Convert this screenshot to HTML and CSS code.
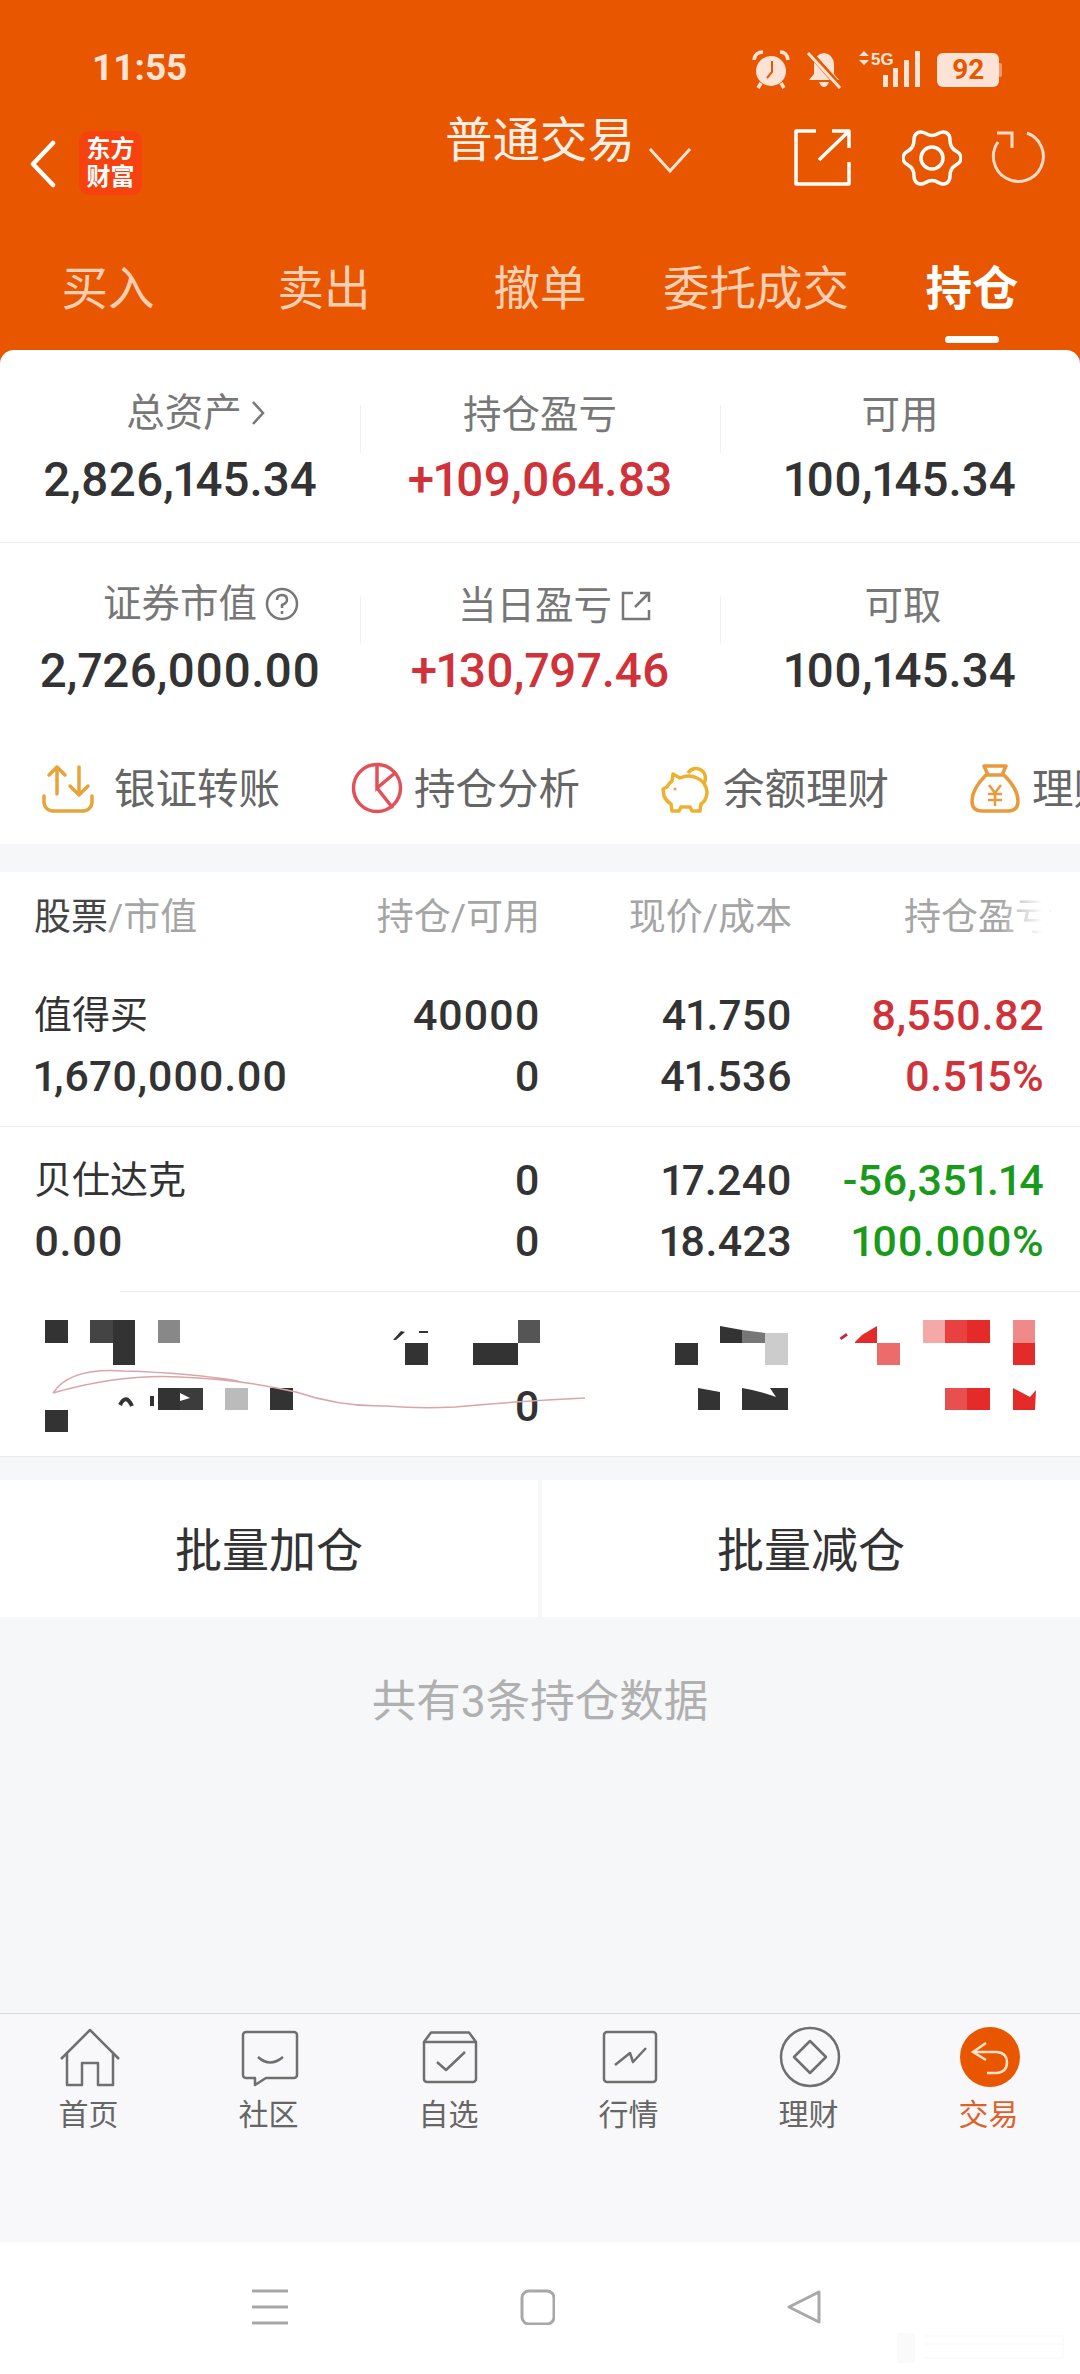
FILE: index.html
```html
<!DOCTYPE html>
<html>
<head>
<meta charset="UTF-8">
<title>持仓</title>
<link rel="stylesheet" href="styles.css">
</head>
<body>
<div class="phone">

	<div class="top">
		<div class="status">
			<span class="time">11:55</span>
			<svg class="st-alarm" width="40" height="40" viewBox="0 0 40 40">
				<circle cx="20" cy="22" r="15" fill="#fde3d5"/>
				<path d="M21 12V23L16 29" fill="none" stroke="#e85700" stroke-width="2"/>
				<path d="M3 11Q4 3 12 3M29 3Q36 3 37 11" fill="none" stroke="#fde3d5" stroke-width="3.5"/>
				<path d="M10 34L7 39M30 34L33 39" stroke="#fde3d5" stroke-width="3.5"/>
			</svg>
			<svg class="st-bell" width="36" height="38" viewBox="0 0 36 38">
				<path d="M18 2Q27 3 28 13V23L33 29H3L8 23V13Q9 3 18 2Z" fill="#fde3d5"/>
				<path d="M13 31H23Q21 36 18 36Q15 36 13 31Z" fill="#fde3d5"/>
				<path d="M3 1L35 37" stroke="#e85700" stroke-width="6"/>
				<path d="M2 2L34 37" stroke="#fde3d5" stroke-width="3"/>
			</svg>
			<svg class="st-signal" width="64" height="38" viewBox="0 0 64 38">
				<path d="M6 1L11 6H1ZM6 15L11 10H1Z" fill="#fde3d5"/>
				<text class="st-5g" x="13" y="15">5G</text>
				<rect x="25" y="25" width="5" height="12" fill="#fde3d5"/>
				<rect x="35" y="18" width="5" height="19" fill="#fde3d5"/>
				<rect x="46" y="10" width="5" height="27" fill="#fde3d5"/>
				<rect x="57" y="1" width="5" height="36" fill="#fde3d5"/>
			</svg>
			<span class="battery">92</span>
		</div>

		<div class="titlebar">
			<svg class="tb-back" width="27" height="48" viewBox="0 0 27 48">
				<path d="M24 3L4 24L24 45" fill="none" stroke="#fff" stroke-width="4.5" stroke-linecap="round" stroke-linejoin="round"/>
			</svg>
			<div class="logo"><span>东方</span><span>财富</span></div>
			<div class="tb-title">普通交易</div>
			<svg class="tb-down" width="44" height="28" viewBox="0 0 44 28">
				<path d="M2 3L22 25L42 3" fill="none" stroke="#fde3d5" stroke-width="3"/>
			</svg>
			<svg class="tb-open" width="60" height="60" viewBox="0 0 60 60">
				<path d="M23 3H3V56H56V34M26 32L56 3M39 3H56V20" fill="none" stroke="#fff" stroke-width="3.5" stroke-linejoin="round"/>
			</svg>
			<svg class="tb-gear" width="60" height="60" viewBox="0 0 60 60" fill="none" stroke="#fff" stroke-width="3.5">
				<defs><path id="lobe" d="M49.5 18.75C53 24.8 59 23 59 30C59 37 53 35.2 49.5 41.25"/></defs>
				<use href="#lobe"/>
				<use href="#lobe" transform="rotate(60 30 30)"/>
				<use href="#lobe" transform="rotate(120 30 30)"/>
				<use href="#lobe" transform="rotate(180 30 30)"/>
				<use href="#lobe" transform="rotate(240 30 30)"/>
				<use href="#lobe" transform="rotate(300 30 30)"/>
				<circle cx="30" cy="30" r="11"/>
			</svg>
			<svg class="tb-refresh" width="60" height="60" viewBox="0 0 60 60" fill="none" stroke="#fbdccb" stroke-width="3">
				<path d="M9 14A25 25 0 1 0 38 5M8 5H23V20"/>
			</svg>
		</div>

		<div class="tabs">
			<div class="tab">买入</div>
			<div class="tab">卖出</div>
			<div class="tab">撤单</div>
			<div class="tab">委托成交</div>
			<div class="tab tab-on">持仓</div>
		</div>
	</div>

	<div class="summary">
		<div class="sum-row sum-first">
			<div class="cell">
				<div class="label shift-a">总资产
					<svg class="lb-icon" width="16" height="26" viewBox="0 0 16 26"><path d="M3 2L13 13L3 24" fill="none" stroke="#777" stroke-width="2.5"/></svg>
				</div>
				<div class="value">2,826,145.34</div>
			</div>
			<div class="cell cell-line">
				<div class="label">持仓盈亏</div>
				<div class="value up">+109,064.83</div>
			</div>
			<div class="cell cell-line">
				<div class="label">可用</div>
				<div class="value">100,145.34</div>
			</div>
		</div>
		<div class="sum-row">
			<div class="cell">
				<div class="label shift-b">证券市值
					<svg class="lb-icon" width="34" height="34" viewBox="0 0 34 34"><circle cx="17" cy="17" r="15" fill="none" stroke="#777" stroke-width="2.5"/><path d="M12 13Q12 8 17 8Q22 8 22 13Q22 16 17 18V21M17 24V27" fill="none" stroke="#777" stroke-width="2.5"/></svg>
				</div>
				<div class="value">2,726,000.00</div>
			</div>
			<div class="cell cell-line">
				<div class="label shift-c">当日盈亏
					<svg class="lb-icon" width="32" height="32" viewBox="0 0 32 32"><path d="M13 3H3V29H29V20M15 17L29 3M20 3H29V12" fill="none" stroke="#777" stroke-width="2.5"/></svg>
				</div>
				<div class="value up">+130,797.46</div>
			</div>
			<div class="cell cell-line">
				<div class="label shift-d">可取</div>
				<div class="value">100,145.34</div>
			</div>
		</div>
		<div class="shortcuts">
			<div class="sc sc-first">
				<svg width="54" height="54" viewBox="0 0 54 54" fill="none" stroke="#e8a33a" stroke-width="3.5" stroke-linecap="round" stroke-linejoin="round">
					<path d="M16 6V33M8 14L16 6L24 14M38 6V33M29 25L38 34L47 25M3 35V41A9 9 0 0 0 12 50H42A9 9 0 0 0 51 41V35"/>
				</svg>
				<span>银证转账</span>
			</div>
			<div class="sc">
				<svg width="54" height="54" viewBox="0 0 54 54" fill="none" stroke="#e2515a" stroke-width="3.5" stroke-linecap="round">
					<circle cx="27" cy="27" r="23.5"/>
					<path d="M27 4V27L45 12M27 27L42 46"/>
				</svg>
				<span>持仓分析</span>
			</div>
			<div class="sc">
				<svg width="54" height="54" viewBox="0 0 54 54" fill="none" stroke="#eeb12f" stroke-width="3.5" stroke-linejoin="round">
					<path d="M14 13L21 17Q30 13 38 17Q47 21 48 31Q48 39 42 43L41 50H33L31 46H22L20 50H13L12 43Q7 40 5 35L4 28L8 26Q10 22 13 20Z"/>
					<path d="M29 12A8.500 8.500 0 1 1 45 22"/>
					<circle cx="16" cy="28" r="1.500" fill="#e8a33a" stroke="none"/>
				</svg>
				<span>余额理财</span>
			</div>
			<div class="sc">
				<svg width="54" height="54" viewBox="0 0 54 54" fill="none" stroke="#e89a3c" stroke-width="3.5" stroke-linejoin="round">
					<path d="M20 14L16 5H38L34 14M18 14H36Q50 28 50 40Q50 50 40 50H14Q4 50 4 40Q4 28 18 14Z"/>
					<path stroke-width="2.5" d="M21 24L27 32L33 24M27 32V45M20 33H34M20 39H34"/>
				</svg>
				<span>理财产品</span>
			</div>
		</div>
	</div>

	<div class="holdings">
		<div class="grid head">
			<div><span class="head-dark">股票</span>/市值</div>
			<div class="num">持仓/可用</div>
			<div class="num">现价/成本</div>
			<div class="num head-fade">持仓盈亏</div>
		</div>

		<div class="grid row">
			<div class="name">值得买</div>
			<div class="num">40000</div>
			<div class="num">41.750</div>
			<div class="num up">8,550.82</div>
			<div>1,670,000.00</div>
			<div class="num">0</div>
			<div class="num">41.536</div>
			<div class="num up">0.515%</div>
		</div>

		<div class="grid row">
			<div class="name">贝仕达克</div>
			<div class="num">0</div>
			<div class="num">17.240</div>
			<div class="num down">-56,351.14</div>
			<div>0.00</div>
			<div class="num">0</div>
			<div class="num">18.423</div>
			<div class="num down">100.000%</div>
		</div>

		<div class="grid row row-masked">
			<div></div><div></div><div></div><div></div>
			<div></div>
			<div class="num">0</div>
			<div></div><div></div>
			<svg class="mosaic" width="1080" height="168" viewBox="0 0 1080 168">
				<rect x="0" y="0" width="120" height="5" fill="#fff"/>
				<g fill="#333">
					<rect x="45" y="31" width="23" height="23"/>
					<rect x="90" y="31" width="23" height="23" fill="#444"/>
					<rect x="113" y="31" width="22" height="45"/>
					<rect x="158" y="31" width="22" height="23" fill="#888"/>
					<rect x="158" y="99" width="22" height="22"/>
					<rect x="180" y="99" width="23" height="22" fill="#3c3c3c"/>
					<rect x="225" y="99" width="23" height="22" fill="#bbb"/>
					<rect x="270" y="99" width="23" height="22"/>
					<rect x="45" y="121" width="23" height="22"/>
					<rect x="405" y="54" width="23" height="22"/>
					<rect x="473" y="54" width="45" height="22"/>
					<rect x="518" y="31" width="22" height="23" fill="#555"/>
					<path d="M393 51L401 42L405 43L396 51Z"/>
					<rect x="419" y="42" width="9" height="2"/>
					<path d="M720 37L742 41V54H720Z"/>
					<path d="M742 41L765 44V54H742Z" fill="#777"/>
					<path d="M765 44H788V76H765Z" fill="#ccc"/>
					<rect x="675" y="54" width="23" height="22"/>
					<path d="M698 99L720 103V121H698Z"/>
					<rect x="742" y="99" width="46" height="22"/>
					<path d="M120 116Q126 104 132 117M152 107V117" fill="none" stroke="#333" stroke-width="4"/>
				</g>
				<path d="M742 99Q760 102 776 108L770 99Z" fill="#fff"/>
				<path d="M180 104L190 109L180 112Z" fill="#fff"/>
				<path d="M855 53L862 46L877 37V54H855Z" fill="#e52a2a"/>
				<rect x="840" y="46" width="8" height="3" fill="#b8303a" transform="rotate(-35 844 48)"/>
				<rect x="877" y="54" width="23" height="22" fill="#ec6b6b"/>
				<rect x="923" y="31" width="22" height="23" fill="#f4a8a8"/>
				<rect x="945" y="31" width="22" height="23" fill="#e94040"/>
				<rect x="967" y="31" width="23" height="23" fill="#e52a2a"/>
				<rect x="1013" y="31" width="22" height="23" fill="#f08a8a"/>
				<rect x="1013" y="54" width="22" height="22" fill="#e52a2a"/>
				<rect x="945" y="99" width="22" height="22" fill="#e85050"/>
				<rect x="967" y="99" width="23" height="22" fill="#e52a2a"/>
				<path d="M1013 99L1030 108L1036 101L1035 121H1013Z" fill="#e52a2a"/>
				<path d="M53 104Q70 78 124 82Q190 84 238 92M53 104Q120 85 179 88Q240 90 296 103Q340 118 386 117Q420 120 455 118Q520 112 585 109" fill="none" stroke="#d9a5a8" stroke-width="1.500"/>
			</svg>
		</div>
	</div>

	<div class="actions">
		<div class="action">批量加仓</div>
		<div class="action">批量减仓</div>
	</div>

	<div class="note">共有3条持仓数据</div>

	<div class="nav">
		<div class="nav-item">
			<svg width="64" height="64" viewBox="0 0 64 64" fill="none" stroke="#6f6f6f" stroke-width="2.5" stroke-linejoin="round">
				<path d="M3 34L32 5L61 34M9 28V60H24V38H40V60H55V28"/>
			</svg>
			<span>首页</span>
		</div>
		<div class="nav-item">
			<svg width="64" height="64" viewBox="0 0 64 64" fill="none" stroke="#6f6f6f" stroke-width="2.5" stroke-linejoin="round">
				<path d="M8 7H56A3 3 0 0 1 59 10V50A3 3 0 0 1 56 53H28L17 60V53H8A3 3 0 0 1 5 50V10A3 3 0 0 1 8 7Z"/>
				<path d="M20 32Q32 43 45 32"/>
			</svg>
			<span>社区</span>
		</div>
		<div class="nav-item">
			<svg width="64" height="64" viewBox="0 0 64 64" fill="none" stroke="#6f6f6f" stroke-width="2.5" stroke-linejoin="round">
				<path d="M6 17L13 7.500H51L58 17V54A3 3 0 0 1 55 57H9A3 3 0 0 1 6 54ZM6 17H58"/>
				<path d="M19 37L28 45L47 27"/>
			</svg>
			<span>自选</span>
		</div>
		<div class="nav-item">
			<svg width="64" height="64" viewBox="0 0 64 64" fill="none" stroke="#6f6f6f" stroke-width="2.5" stroke-linejoin="round">
				<rect x="6" y="7" width="52" height="50" rx="3"/>
				<path d="M17 40L32 28L35 37L48 23"/>
			</svg>
			<span>行情</span>
		</div>
		<div class="nav-item">
			<svg width="64" height="64" viewBox="0 0 64 64" fill="none" stroke="#6f6f6f" stroke-width="2.5" stroke-linejoin="round">
				<circle cx="32" cy="32" r="29"/>
				<path d="M32 16L48 32L32 48L16 32Z"/>
			</svg>
			<span>理财</span>
		</div>
		<div class="nav-item nav-on">
			<svg width="64" height="64" viewBox="0 0 64 64" fill="none">
				<circle cx="32" cy="32" r="30" fill="#e85700"/>
				<path d="M28 18L15 27L28 35M15 27H39Q49 28 49 37Q49 47 39 48H29" stroke="#fde0c8" stroke-width="2.5"/>
			</svg>
			<span>交易</span>
		</div>
	</div>

	<div class="keys">
		<svg width="36" height="36" viewBox="0 0 36 36"><path d="M0 2H36M0 18H36M0 34H36" stroke="#a8a8a8" stroke-width="3"/></svg>
		<svg width="36" height="36" viewBox="0 0 36 36"><rect x="3" y="2" width="32" height="33" rx="7" fill="none" stroke="#a8a8a8" stroke-width="3"/></svg>
		<svg width="36" height="36" viewBox="0 0 36 36"><path d="M33 3V33L3 18Z" fill="none" stroke="#a8a8a8" stroke-width="3" stroke-linejoin="round"/></svg>
		<svg class="mark" width="180" height="36" viewBox="0 0 180 36">
			<rect x="4" y="3" width="18" height="30" fill="#fafafa"/>
			<path d="M30 6H170M30 14H170M30 28H170M170 6V28" stroke="#fbfbfb" stroke-width="2" fill="none"/>
		</svg>
	</div>

</div>
</body>
</html>
```

FILE: styles.css
```css
*{
	box-sizing : border-box;
}

html, body{
	margin : 0;
	padding : 0;
}

body{
	font-family : Roboto, "Noto Sans CJK SC", sans-serif;
}

.phone{
	position : relative;
	width : 1080px;
	height : 2374px;
	overflow : hidden;
	display : flex;
	flex-direction : column;
	background-color : #f6f7f9;
}

/* orange header */
.top{
	height : 364px;
	background-color : #e85700;
	color : #fff;
}

.status{
	height : 100px;
	display : flex;
	align-items : flex-start;
	padding-top : 49px;
	color : #fde3d5;
}

.time{
	margin-left : 92px;
	font-size : 37px;
	line-height : 38px;
	font-weight : 700;
}

.st-alarm{
	margin-left : 564px;
}

.st-bell{
	margin-left : 15px;
	margin-top : 2px;
}

.st-signal{
	margin-left : 16px;
	margin-top : 1px;
}

.st-5g{
	font-family : "Liberation Sans", sans-serif;
	font-size : 17px;
	font-weight : 700;
	fill : #fde3d5;
}

.battery{
	position : relative;
	width : 62px;
	height : 34px;
	margin-left : 15px;
	margin-top : 4px;
	background-color : #fde3d5;
	border-radius : 6px;
	color : #e85700;
	font-size : 28px;
	line-height : 34px;
	font-weight : 700;
	text-align : center;
}

.battery::after{
	content : "";
	position : absolute;
	left : 62px;
	top : 10px;
	width : 3px;
	height : 14px;
	background-color : #f59a66;
	border-radius : 0 2px 2px 0;
}

.titlebar{
	height : 100px;
	display : flex;
	align-items : center;
}

.tb-back{
	margin-left : 29px;
	margin-top : 28px;
}

.logo{
	width : 63px;
	height : 64px;
	margin-left : 23px;
	margin-top : 26px;
	background-color : #f5420f;
	border-radius : 10px;
	display : flex;
	flex-direction : column;
	align-items : center;
	justify-content : center;
	font-size : 24px;
	line-height : 28px;
	font-weight : 700;
}

.tb-title{
	margin-left : 303px;
	margin-bottom : 18px;
	font-size : 47.5px;
	line-height : 60px;
	color : #fdeee6;
}

.tb-down{
	margin-left : 13px;
	margin-top : 19px;
}

.tb-open{
	margin-left : 101px;
	margin-top : 16px;
}

.tb-gear{
	margin-left : 49px;
	margin-top : 16px;
}

.tb-refresh{
	margin-left : 27px;
	margin-top : 16px;
}

.tabs{
	margin-top : 38px;
	display : grid;
	grid-template-columns : repeat(5, 216px);
}

.tab{
	position : relative;
	font-size : 46.5px;
	line-height : 102px;
	text-align : center;
	color : #fbcfb4;
}

.tab-on{
	color : #fff;
	font-weight : 700;
}

.tab-on::after{
	content : "";
	position : absolute;
	left : 81px;
	top : 98px;
	width : 54px;
	height : 7px;
	background-color : #fff;
	border-radius : 4px;
}

/* account summary */
.summary{
	margin-top : -14px;
	position : relative;
	height : 494px;
	background-color : #fff;
	border-radius : 14px 14px 0 0;
}

.sum-row{
	height : 189px;
	display : grid;
	grid-template-columns : repeat(3, 360px);
}

.sum-first{
	height : 193px;
	border-bottom : 1px solid #eee;
	padding-top : 2px;
}

.cell{
	position : relative;
	padding-top : 40px;
	text-align : center;
}

.cell-line{
	padding-top : 42px;
}

.cell-line .value{
	margin-top : 16px;
}

.cell-line::before{
	content : "";
	position : absolute;
	left : 0;
	top : 53px;
	width : 1px;
	height : 48px;
	background-color : #f0f0f0;
}

.label{
	height : 42px;
	display : flex;
	align-items : center;
	justify-content : center;
	font-size : 38.5px;
	line-height : 42px;
	color : #777;
}

.lb-icon{
	margin-left : 8px;
}

.shift-a{
	padding-left : 32px;
}

.shift-b{
	padding-left : 42px;
}

.shift-c{
	padding-left : 30px;
}

.shift-d{
	padding-left : 6px;
}

.value{
	margin-top : 18px;
	font-size : 47.5px;
	line-height : 56px;
	font-weight : 500;
	font-feature-settings : "pnum";
	color : #333;
}

.up{
	color : #d0323a;
}

.down{
	color : #1a9a1a;
}

.shortcuts{
	height : 112px;
	display : flex;
	align-items : center;
	padding-left : 41px;
	white-space : nowrap;
}

.sc{
	flex : none;
	width : 309px;
	display : flex;
	align-items : center;
	gap : 10px;
	font-size : 41.5px;
	color : #666;
}

.sc span{
	margin-bottom : 4px;
}

.sc-first{
	gap : 19px;
}

/* holdings table */
.holdings{
	margin-top : 28px;
	background-color : #fff;
	border-bottom : 1px solid #e9ebee;
}

.grid{
	display : grid;
	grid-template-columns : 252px 254px 252px 252px;
	padding-left : 34px;
}

.head{
	height : 90px;
	position : relative;
	align-items : center;
	padding-bottom : 7px;
	font-size : 37px;
	color : #a5a5a5;
}

.head-dark{
	color : #444;
}

.head-fade{
	margin-right : -8px;
}

.head-fade::after{
	content : "";
	position : absolute;
	left : 1000px;
	top : 0;
	width : 50px;
	height : 90px;
	background : linear-gradient(to right, rgba(255,255,255,0), #fff 85%);
}

.num{
	text-align : right;
}

.row{
	height : 165px;
	padding-top : 23px;
	border-bottom : 1px solid #eee;
	grid-auto-rows : 61px;
	font-size : 43px;
	line-height : 61px;
	font-weight : 500;
	font-feature-settings : "pnum";
	letter-spacing : 0.3px;
	color : #333;
	align-items : center;
}

.name{
	font-size : 38px;
	font-weight : 400;
	letter-spacing : 0;
}

.row-masked{
	position : relative;
	border-bottom : none;
	height : 164px;
}

/* covers the redacted row */
.mosaic{
	position : absolute;
	left : 0;
	top : -3px;
}

.actions{
	margin-top : 23px;
	display : flex;
	justify-content : space-between;
}

.action{
	width : 538px;
	height : 137px;
	background-color : #fff;
	font-size : 47px;
	line-height : 141px;
	text-align : center;
	color : #333;
}

.note{
	margin-top : 55px;
	font-size : 44.5px;
	line-height : 60px;
	text-align : center;
	color : #b0b0b0;
}

/* bottom navigation */
.nav{
	margin-top : auto;
	height : 229px;
	flex : none;
	display : grid;
	grid-template-columns : repeat(6, 180px);
	background-color : #f8f8fa;
	border-top : 1px solid #d8d8d8;
}

.nav-item{
	display : flex;
	flex-direction : column;
	align-items : center;
	padding-top : 11px;
	font-size : 30px;
	line-height : 36px;
	color : #666;
}

.nav-item span{
	margin-top : 8px;
	margin-right : 3px;
}

.nav-on{
	color : #e0602a;
}

.keys{
	position : relative;
	height : 132px;
	flex : none;
	display : flex;
	gap : 231px;
	padding-top : 47px;
	padding-left : 252px;
	background-color : #fff;
}

.mark{
	position : absolute;
	left : 893px;
	top : 88px;
}
```
